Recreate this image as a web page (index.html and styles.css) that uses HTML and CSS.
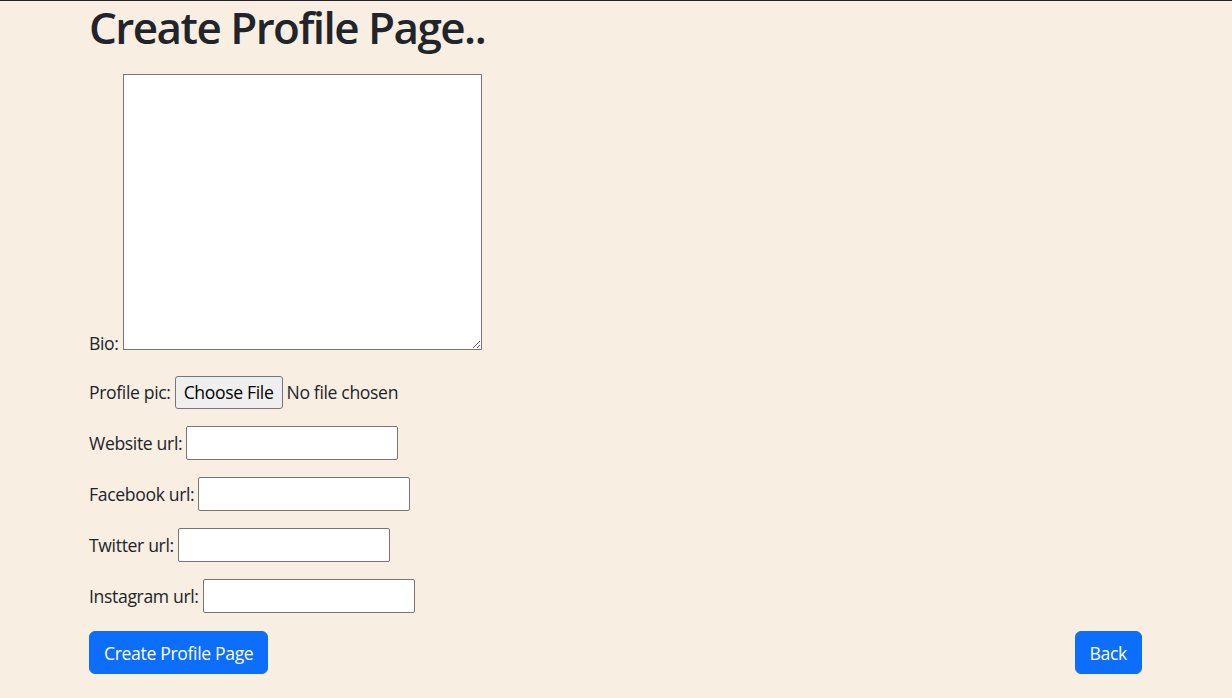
FILE: index.html
```html
<!DOCTYPE html>
<html lang="en">
<head>
<meta charset="utf-8">
<title>Create Profile Page</title>
<link rel="stylesheet" href="styles.css">
</head>
<body>
<main class="page">
  <h1 class="title">Create Profile Page..</h1>
  <form class="form">
    <div class="row row-bio">
      <label class="label" for="bio">Bio:</label>
      <textarea id="bio" class="bio"></textarea>
    </div>
    <div class="row">
      <span class="label">Profile pic:</span>
      <button type="button" class="file-btn">Choose File</button>
      <span class="file-name">No file chosen</span>
    </div>
    <div class="row">
      <label class="label" for="web">Website url:</label>
      <input id="web" class="text" type="text">
    </div>
    <div class="row">
      <label class="label" for="fb">Facebook url:</label>
      <input id="fb" class="text" type="text">
    </div>
    <div class="row">
      <label class="label" for="tw">Twitter url:</label>
      <input id="tw" class="text" type="text">
    </div>
    <div class="row">
      <label class="label" for="ig">Instagram url:</label>
      <input id="ig" class="text" type="text">
    </div>
    <div class="actions">
      <button type="button" class="btn">Create Profile Page</button>
      <button type="button" class="btn">Back</button>
    </div>
  </form>
</main>
</body>
</html>
```
FILE: styles.css
```css
* { box-sizing: border-box; }
html, body { margin: 0; }
body {
  background: #f8eee2;
  border-top: 1px solid #212529;
  font-family: "Open Sans", "Noto Sans", sans-serif;
  font-size: 17.6px;
  letter-spacing: -0.02em;
  color: #212529;
  height: 698px;
  overflow: hidden;
  padding: 0 90px 0 89px;
}
.title {
  font-size: 44px;
  font-weight: 600;
  line-height: 1.2;
  margin: 0;
  height: 73px;
  letter-spacing: -0.035em;
}
.form {
  display: flex;
  flex-direction: column;
  gap: 17px;
}
.row {
  display: flex;
  align-items: center;
  gap: 4px;
  height: 34px;
}
.row-bio {
  align-items: flex-end;
  height: auto;
  margin-bottom: 8px;
  gap: 4px;
}
.label { line-height: 1.5; }
.row-bio .label { line-height: 1; margin-bottom: -3px; }
.bio {
  width: 359px;
  height: 276px;
  margin: 0;
  border: 1px solid #767676;
  border-radius: 0;
  background: #fff;
  resize: both;
}
.file-btn {
  height: 33px;
  padding: 0 8px;
  background: #efefef;
  border: 1px solid #767676;
  border-radius: 3px;
  font: inherit;
  color: #000;
  letter-spacing: inherit;
}
.text {
  width: 212px;
  height: 34px;
  border: 1px solid #767676;
  border-radius: 2px;
  background: #fff;
  margin: 0;
}
.actions {
  display: flex;
  justify-content: space-between;
  margin-top: 1px;
}
.btn {
  background: #0d6efd;
  color: #fff;
  border: 1px solid #0d6efd;
  border-radius: 6px;
  padding: 7.5px 14px;
  font: inherit;
  line-height: 1.5;
  letter-spacing: inherit;
}
```
